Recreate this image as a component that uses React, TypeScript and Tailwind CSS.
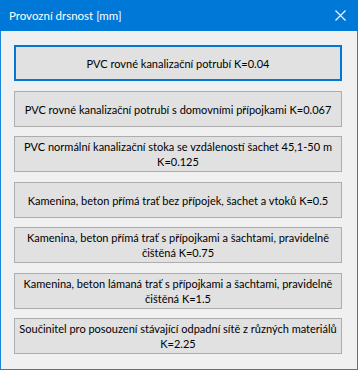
const items = [
  { lines: ["PVC rovné kanalizační potrubí K=0.04"], focused: true, mt: "mt-0" },
  { lines: ["PVC rovné kanalizační potrubí s domovními přípojkami K=0.067"], mt: "mt-[10px]" },
  { lines: ["PVC normální kanalizační stoka se vzdáleností šachet 45,1-50 m", "K=0.125"], mt: "mt-[9px]" },
  { lines: ["Kamenina, beton přímá trať bez přípojek, šachet a vtoků K=0.5"], mt: "mt-[10px]" },
  { lines: ["Kamenina, beton přímá trať s přípojkami a šachtami, pravidelně", "čištěná K=0.75"], mt: "mt-[9px]" },
  { lines: ["Kamenina, beton lámaná trať s přípojkami a šachtami, pravidelně", "čištěná K=1.5"], mt: "mt-[10px]" },
  { lines: ["Součinitel pro posouzení stávající odpadní sítě z různých materiálů", "K=2.25"], mt: "mt-[9px]" },
];

export default function App() {
  return (
    <div
      className="flex h-[370px] w-[358px] flex-col border border-t-0 border-[#1883d7] bg-[#f0f0f0] text-[11px] text-black"
      style={{ fontFamily: 'Lato, "Noto Sans", sans-serif' }}
    >
      <div className="-mx-px flex h-[31px] shrink-0 items-center justify-between bg-[#0078d7] pl-[9px] pr-[11px] text-white">
        <span className="text-[11.5px]">Provozní drsnost [mm]</span>
        <svg width="11" height="11" viewBox="0 0 11 11" className="mr-[1px]">
          <path d="M0.5 0.5 L10.5 10.5 M10.5 0.5 L0.5 10.5" stroke="white" strokeWidth="1.1" />
        </svg>
      </div>

      <div className="flex flex-col px-[13px] pt-[14px]">
        {items.map((it) => (
          <button
            key={it.lines[0]}
            className={`${it.mt} flex h-[36px] w-[328px] flex-col items-center justify-center whitespace-nowrap bg-[#e1e1e1] text-center leading-[15px] ${
              it.focused ? "border-2 border-[#0078d7]" : "border border-[#adadad]"
            }`}
          >
            {it.lines.map((l) => (
              <span key={l}>{l}</span>
            ))}
          </button>
        ))}
      </div>
    </div>
  );
}
